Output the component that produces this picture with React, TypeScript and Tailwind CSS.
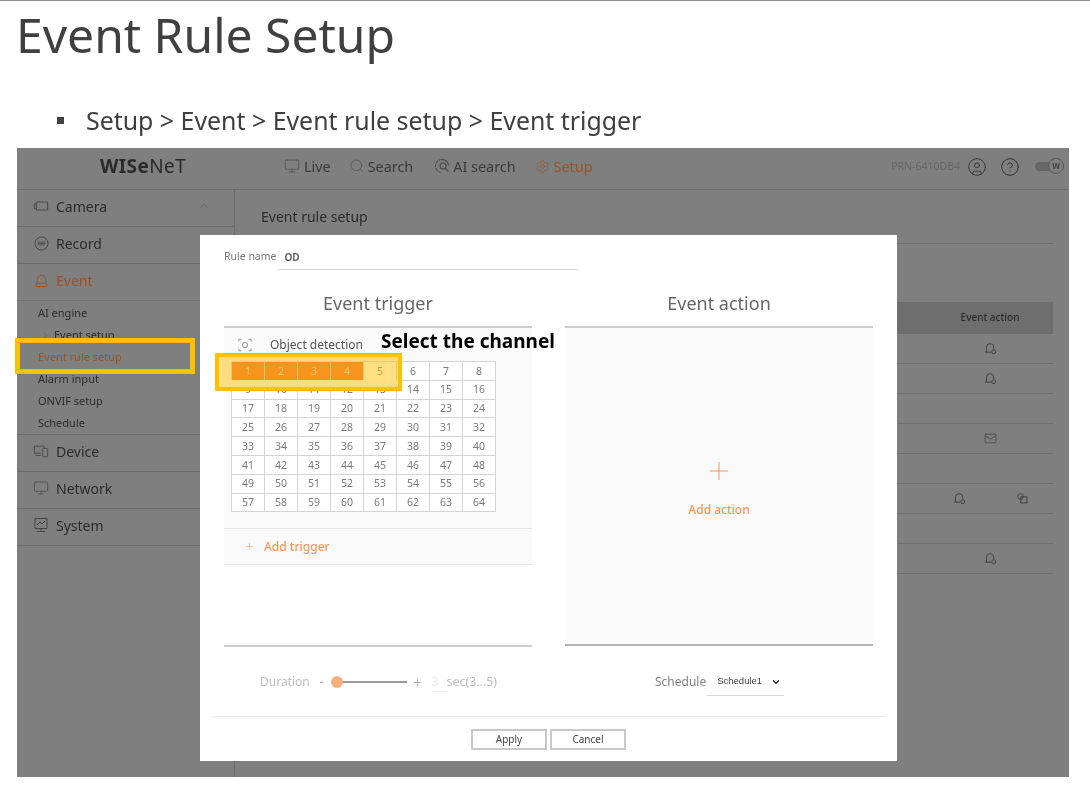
import React from 'react';
import {
  Monitor,
  Search,
  Settings,
  ChevronUp,
  ChevronRight,
  ChevronDown,
  Plus,
  CircleUser,
  CircleHelp,
  Mail,
} from 'lucide-react';

const IconBell = ({ className = '' }: { className?: string }) => (
  <svg viewBox="0 0 16 16" fill="none" stroke="currentColor" strokeWidth="1.1" className={className}>
    <path d="M3 12.5V6.5a4.5 4.5 0 0 1 9 0v2.5" />
    <path d="M1 12.5h8" />
    <circle cx="12" cy="12" r="2.4" />
  </svg>
);

const IconCamera = ({ className = '' }: { className?: string }) => (
  <svg viewBox="0 0 18 14" fill="none" stroke="currentColor" strokeWidth="1" className={className}>
    <path d="M4 2.5h12.5v9H4zM4 4.5H1.5v5.5H4" />
  </svg>
);

const IconRecord = ({ className = '' }: { className?: string }) => (
  <svg viewBox="0 0 16 16" fill="none" stroke="currentColor" strokeWidth="1" className={className}>
    <circle cx="8" cy="8" r="7" />
    <path d="M4 8h8M4 6.5h8M4 9.5h8" strokeWidth="0.8" />
  </svg>
);

const IconSiren = ({ className = '' }: { className?: string }) => (
  <svg viewBox="0 0 16 16" fill="none" stroke="currentColor" strokeWidth="1" className={className}>
    <path d="M3.5 11V7a4.5 4.5 0 0 1 9 0v4" />
    <path d="M2.5 11h11v3.5h-11z" />
  </svg>
);

const IconDevice = ({ className = '' }: { className?: string }) => (
  <svg viewBox="0 0 18 16" fill="none" stroke="currentColor" strokeWidth="1" className={className}>
    <path d="M9 10.5H1.5v-8h11v2" />
    <path d="M3 13h6" />
    <rect x="11" y="5" width="5.5" height="9.5" rx="1" />
  </svg>
);

const IconSystem = ({ className = '' }: { className?: string }) => (
  <svg viewBox="0 0 16 16" fill="none" stroke="currentColor" strokeWidth="1" className={className}>
    <path d="M2 1.5h12v10H2zM8 11.5v3M4 14.5h8" />
    <path d="M4 8l3-3 2 2 3-3" />
  </svg>
);

const IconAiSearch = ({ className = '' }: { className?: string }) => (
  <svg viewBox="0 0 16 16" fill="none" stroke="currentColor" strokeWidth="1.1" className={className}>
    <path d="M8 1.5a6.5 6.5 0 1 0 0 13" strokeDasharray="3 1" />
    <path d="M8 1.5a6.5 6.5 0 0 1 6.5 6" />
    <circle cx="9" cy="8" r="3" />
    <path d="M11.5 10.5l3 3" />
  </svg>
);

const IconCopy = ({ className = '' }: { className?: string }) => (
  <svg viewBox="0 0 16 16" fill="none" stroke="currentColor" strokeWidth="1.1" className={className}>
    <circle cx="5.5" cy="5.5" r="3.5" />
    <rect x="6" y="6" width="7.5" height="7.5" />
  </svg>
);

const IconObject = ({ className = '' }: { className?: string }) => (
  <svg viewBox="0 0 16 16" fill="none" stroke="currentColor" strokeWidth="1" className={className}>
    <path d="M1 4V1.5h3M12 1.5h3V4M15 12v2.5h-3M4 14.5H1V12" />
    <circle cx="8" cy="8" r="3" />
  </svg>
);

const sideItems = [
  { label: 'Device', Icon: IconDevice },
  { label: 'Network', Icon: Monitor },
  { label: 'System', Icon: IconSystem },
];

const subItems = ['AI engine', 'Event setup', 'Event rule setup', 'Alarm input', 'ONVIF setup', 'Schedule'];

const Sidebar = () => (
  <aside className="w-[218px] shrink-0 border-r border-[#6b6b6b] text-[14px] text-[#2c2c2c]">
    <div className="flex h-[37px] items-center border-b border-[#6b6b6b] pb-[4px] pl-[16px] pr-[23px]">
      <IconCamera className="h-[14px] w-[16px] text-[#444]" />
      <span className="ml-[7px]">Camera</span>
      <ChevronUp className="ml-auto h-[14px] w-[14px] text-[#5a5a5a]" strokeWidth={1.2} />
    </div>
    <div className="flex h-[37px] items-center border-b border-[#6b6b6b] pb-[4px] pl-[17px]">
      <IconRecord className="h-[15px] w-[15px] text-[#444]" />
      <span className="ml-[7px]">Record</span>
    </div>
    <div className="flex h-[37px] items-center border-b border-[#727272] pb-[4px] pl-[17px] text-[#9a5227]">
      <IconSiren className="h-[15px] w-[15px]" />
      <span className="ml-[7px]">Event</span>
    </div>
    <ul className="border-b border-[#6b6b6b] pt-[1px] text-[11px] text-[#2c2c2c]">
      {subItems.map((item, i) => (
        <li
          key={item}
          className={`flex h-[22px] items-center ${i === 1 ? 'pl-[24px]' : 'pl-[21px]'} ${i === 2 ? 'text-[#9a5227]' : ''}`}
        >
          {i === 1 && <ChevronRight className="mr-[4px] h-[9px] w-[9px] text-[#555]" strokeWidth={1.2} />}
          {item}
        </li>
      ))}
    </ul>
    {sideItems.map(({ label, Icon }) => (
      <div key={label} className="flex h-[37px] items-center border-b border-[#6b6b6b] pb-[4px] pl-[16px]">
        <Icon className="h-[16px] w-[16px] text-[#444]" strokeWidth={1} />
        <span className="ml-[7px]">{label}</span>
      </div>
    ))}
  </aside>
);

const tableRows: React.ReactNode[][] = [
  [<IconBell key="a" className="h-[13px] w-[13px]" />],
  [<IconBell key="a" className="h-[13px] w-[13px]" />],
  [],
  [<Mail key="a" className="h-[13px] w-[13px]" strokeWidth={1.2} />],
  [],
  [<IconBell key="a" className="h-[13px] w-[13px]" />, <IconCopy key="b" className="h-[13px] w-[13px]" />],
  [],
  [<IconBell key="a" className="h-[13px] w-[13px]" />],
];

const Background = () => (
  <div className="flex-1 pl-[26px] pr-[16px] text-[#2c2c2c]">
    <div className="flex h-[54px] items-center border-b border-[#6e6e6e] text-[14px]">Event rule setup</div>
    <div className="mt-[58px] flex h-[32px] items-center justify-end border-b border-[#6b6b6b] bg-[#6e6e6e] text-[10px] font-medium">
      <span className="w-[126px] text-center">Event action</span>
    </div>
    {tableRows.map((icons, i) => (
      <div key={i} className="flex h-[30px] items-center justify-end border-b border-[#6e6e6e] text-[#3a3a3a]">
        {icons.length === 2 ? (
          <div className="flex w-[126px] justify-between pl-[26px] pr-[24px]">{icons}</div>
        ) : (
          <div className="flex w-[126px] justify-center">{icons}</div>
        )}
      </div>
    ))}
  </div>
);

const channels = Array.from({ length: 64 }, (_, i) => i + 1);

const ChannelGrid = () => (
  <div className="ml-[7px] grid w-[265px] grid-cols-8 border-l border-t border-[#d4d4d4] bg-white">
    {channels.map((ch) => (
      <div
        key={ch}
        className={`flex h-[18.8px] items-center justify-center border-b border-r border-[#d4d4d4] pt-px text-[10.5px] ${
          ch <= 4 ? 'bg-[#ef683a] text-[#ffd0c0]' : 'text-[#7a7a7a]'
        }`}
      >
        {ch}
      </div>
    ))}
  </div>
);

const Modal = () => (
  <div className="absolute left-[183px] top-[87px] flex h-[526px] w-[697px] flex-col bg-white text-[#6f6f6f]">
    <div className="flex h-[35px] items-end pl-[24px]">
      <span className="pb-[5px] text-[10.5px] text-[#777]">Rule name</span>
      <div className="ml-[1px] h-[35px] w-[300px] border-b border-[#d6d6d6] pb-[6px] pl-[7px] pt-[15px] text-[10px] font-semibold leading-[14px] text-[#555]">
        OD
      </div>
    </div>
    <div className="flex min-h-0 flex-1 gap-[33px] px-[24px]">
      <section className="flex w-[308px] flex-col">
        <h3 className="flex h-[56px] shrink-0 items-center justify-center pt-[10px] text-[18px] font-normal text-[#666]">Event trigger</h3>
        <div className="shrink-0 border-t-2 border-[#cdcdcd] bg-[#fafafa]">
          <div className="flex h-[33px] items-center pl-[14px]">
            <IconObject className="h-[14px] w-[14px] text-[#8a8a8a]" />
            <span className="ml-[18px] text-[12px] text-[#555]">Object detection</span>
          </div>
          <ChannelGrid />
          <div className="h-[16px]" />
        </div>
        <div className="flex h-[37px] shrink-0 items-center border-y border-[#e4e4e4] bg-[#fafafa] pl-[20px] text-[12px] font-medium text-[#f79659]">
          <Plus className="mr-[9px] h-[11px] w-[11px]" strokeWidth={1} />
          Add trigger
        </div>
        <div className="h-[82px] shrink-0 border-b-2 border-[#cdcdcd]" />
        <div className="flex h-[70px] shrink-0 items-center pl-[36px] text-[12px] text-[#bdbdbd]">
          Duration
          <span className="ml-[10px] font-bold">-</span>
          <div className="ml-[7px] flex w-[76px] items-center">
            <span className="h-[12px] w-[12px] shrink-0 rounded-full bg-[#f9ae7f]" />
            <span className="h-[2px] flex-1 bg-[#9a9a9a]" />
          </div>
          <Plus className="ml-[5px] h-[11px] w-[11px] text-[#999]" strokeWidth={1.6} />
          <span className="ml-[9px] w-[15px] border-b border-[#f0f0f0] text-[#e6e6e6]">3</span>
          <span className="text-[12.4px]">sec(3...5)</span>
        </div>
      </section>
      <section className="flex w-[308px] flex-col">
        <h3 className="flex h-[56px] shrink-0 items-center justify-center pt-[10px] text-[18px] font-normal text-[#666]">Event action</h3>
        <div className="flex h-[320px] shrink-0 flex-col items-center border-y-2 border-t-[#cdcdcd] border-b-[#b5b5b5] bg-[#fafafa] pt-[128px] text-[#f79659]">
          <Plus className="h-[30px] w-[30px]" strokeWidth={0.8} />
          <span className="mt-[15px] text-[12px] font-medium">Add action</span>
        </div>
        <div className="flex h-[72px] shrink-0 items-center pl-[90px] text-[12px] text-[#808080]">
          Schedule
          <div className="ml-[1px] flex h-[28px] w-[77px] items-center border-b border-[#d6d6d6] pl-[10px] font-['Liberation_Sans',sans-serif] text-[9.5px] text-[#444]">
            Schedule1
            <ChevronDown className="ml-[9px] h-[10px] w-[10px] text-[#222]" strokeWidth={3} />
          </div>
        </div>
      </section>
    </div>
    <div className="mx-[12px] flex h-[45px] items-start justify-center gap-[3px] border-t border-[#ececec] pt-[12px] text-[10px] text-[#444]">
      <button className="h-[21px] w-[76px] border-2 border-[#c8c8c8]">Apply</button>
      <button className="h-[21px] w-[76px] border-2 border-[#c8c8c8]">Cancel</button>
    </div>
  </div>
);

export default function App() {
  return (
    <div className="relative h-[789px] w-[1090px] overflow-hidden bg-white font-['Noto_Sans',sans-serif] blur-[0.4px]">
      <div className="h-px bg-[#8c8c8c]" />
      <h1 className="ml-[16px] h-[70px] text-[48px] font-normal leading-[68px] text-[#404040]">Event Rule Setup</h1>
      <div className="flex h-[77px] items-center pl-[57px] pt-[22px] text-[24.9px] text-[#404040]">
        <span className="mr-[22px] h-[7px] w-[7px] bg-[#404040]" />
        {'Setup > Event > Event rule setup > Event trigger'}
      </div>

      <div className="relative mx-[17px] flex h-[629px] w-[1052px] flex-col bg-[#7f7f7f]">
        <header className="flex h-[42px] shrink-0 items-center border-b border-[#707070] pb-[4px] text-[14.4px] text-[#3a3a3a]">
          <div className="w-[83px]" />
          <div className="w-[184px] text-[19px] leading-none tracking-[0.4px] text-[#2a2a2a]">
            <span className="font-bold">WISe</span>
            <span>NeT</span>
          </div>
          <span className="flex items-center">
            <Monitor className="mr-[4px] h-[16px] w-[16px] text-[#4a4a4a]" strokeWidth={1} />
            Live
          </span>
          <span className="ml-[18px] flex items-center">
            <Search className="mr-[3px] h-[16px] w-[16px] text-[#4a4a4a]" strokeWidth={1} />
            Search
          </span>
          <span className="ml-[21px] flex items-center">
            <IconAiSearch className="mr-[3px] h-[16px] w-[16px] text-[#4a4a4a]" />
            AI search
          </span>
          <span className="ml-[19px] flex items-center text-[#9a5227]">
            <Settings className="mr-[4px] h-[15px] w-[15px]" strokeWidth={1} />
            Setup
          </span>
          <span className="ml-auto text-[10.5px] text-[#666]">PRN-6410DB4</span>
          <CircleUser className="ml-[7px] h-[20px] w-[20px] text-[#333]" strokeWidth={1.1} />
          <CircleHelp className="ml-[13px] h-[20px] w-[20px] text-[#333]" strokeWidth={1.2} />
          <div className="relative ml-[15px] mr-[5px] h-[9px] w-[29px] rounded-full bg-[#666]">
            <span className="absolute -top-[4px] right-0 flex h-[16px] w-[16px] items-center justify-center rounded-full border border-[#5a5a5a] bg-[#7f7f7f] text-[8px] font-bold text-[#444]">
              W
            </span>
          </div>
        </header>
        <div className="flex flex-1">
          <Sidebar />
          <Background />
        </div>
        <Modal />
      </div>

      {/* callouts drawn over the screenshot */}
      <div className="absolute left-[15px] top-[338px] h-[36px] w-[180px] border-[5px] border-[#ffc000]" />
      <div className="absolute left-[215px] top-[353px] flex h-[38px] w-[187px] items-end border-[4px] border-[#ffc000] bg-[#ffc000]/50">
        <div className="h-[7px] w-full bg-[#ffdd80]" />
      </div>
      <div className="absolute left-[381px] top-[329px] text-[19px] font-bold leading-[25px] text-black">Select the channel</div>
    </div>
  );
}
